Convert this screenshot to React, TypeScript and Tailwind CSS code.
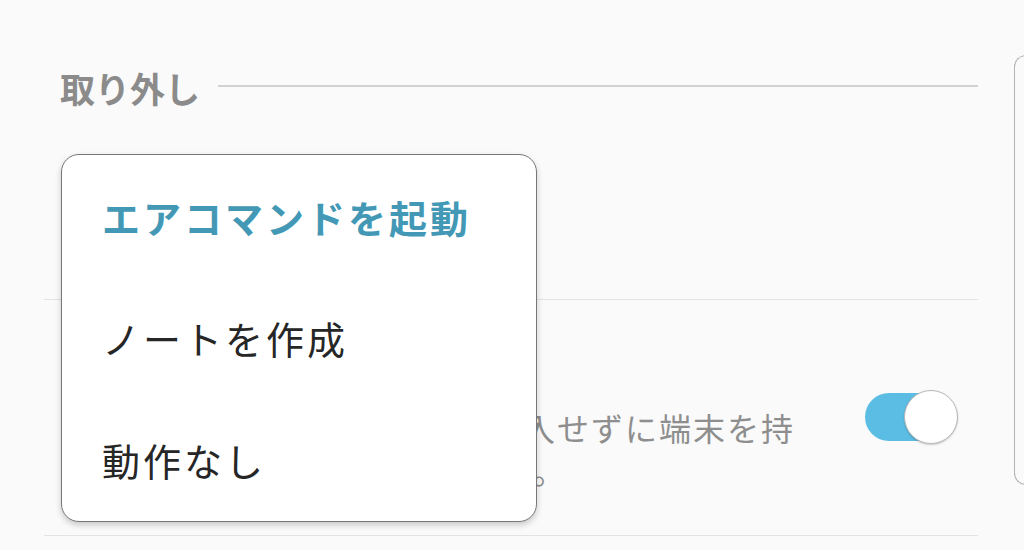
export default function App() {
  const font = { fontFamily: '"Noto Sans CJK JP", "Noto Sans", sans-serif' }

  return (
    <div className="relative w-[1024px] h-[550px] overflow-hidden bg-[#fafafa] flex" style={font}>
      {/* main settings column */}
      <div className="w-[1014px] shrink-0 pl-[44px] pr-[36px]">
        <div className="flex items-center pt-[66px] pl-[16px]">
          <span className="text-[35px] leading-[44px] font-bold text-[#8b8b8b]">取り外し</span>
          <div className="flex-1 h-[2px] bg-[#d2d2d2] ml-[18px] mt-[-4px]"></div>
        </div>

        {/* row under the open menu */}
        <div className="h-[189px]"></div>

        <div className="h-px bg-[#e3e3e3]"></div>

        <div className="flex items-center h-[235px] pl-[16px]">
          <div className="flex-1 pt-[62px]">
            <div className="text-[32px] leading-[43px] text-[#8e8e8e] tracking-[2px] whitespace-nowrap">
              <div>画面オフ時にSペンを本体に挿入せずに端末を持</div>
              <div>ち歩くとアラートを鳴らします。</div>
            </div>
          </div>
          <div className="relative w-[93px] h-[54px] mr-[20px] mt-[-2px]">
            <div className="absolute left-0 top-[3px] w-[80px] h-[48px] rounded-full bg-[#5bbde4]"></div>
            <div className="absolute right-0 top-0 w-[54px] h-[54px] rounded-full bg-white border-[1.5px] border-[#b8b8b8] shadow-[0_1px_2px_rgba(0,0,0,0.2)]"></div>
          </div>
        </div>

        <div className="h-px bg-[#e3e3e3]"></div>
      </div>

      {/* next panel peeking in at the right */}
      <div className="mt-[55px] h-[430px] w-[40px] shrink-0 border-[1.5px] border-r-0 border-[#b3b3b3] rounded-l-[12px] bg-[#fafafa]"></div>

      {/* dropdown menu */}
      <div className="absolute left-[61px] top-[154px] w-[476px] h-[368px] bg-white border-[1.5px] border-[#777] rounded-[18px] shadow-[0_3px_6px_rgba(0,0,0,0.2)] flex flex-col py-px">
        <div className="h-[122px] flex items-center pl-[40px] text-[38px] font-bold text-[#4399b5] tracking-[3px]">エアコマンドを起動</div>
        <div className="h-[122px] flex items-center pl-[40px] text-[38px] text-[#262626] tracking-[3px]">ノートを作成</div>
        <div className="h-[122px] flex items-center pl-[40px] text-[38px] text-[#262626] tracking-[3px]">動作なし</div>
      </div>
    </div>
  )
}
